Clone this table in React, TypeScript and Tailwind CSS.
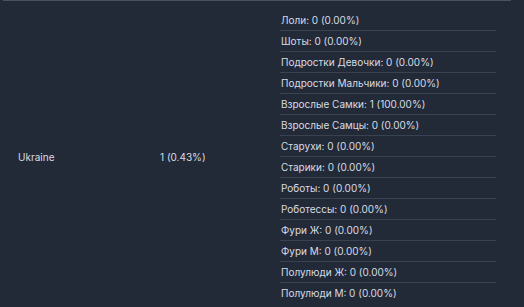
const breakdown = [
  'Лоли: 0 (0.00%)',
  'Шоты: 0 (0.00%)',
  'Подростки Девочки: 0 (0.00%)',
  'Подростки Мальчики: 0 (0.00%)',
  'Взрослые Самки: 1 (100.00%)',
  'Взрослые Самцы: 0 (0.00%)',
  'Старухи: 0 (0.00%)',
  'Старики: 0 (0.00%)',
  'Роботы: 0 (0.00%)',
  'Роботессы: 0 (0.00%)',
  'Фури Ж: 0 (0.00%)',
  'Фури М: 0 (0.00%)',
  'Полулюди Ж: 0 (0.00%)',
  'Полулюди М: 0 (0.00%)',
];

export default function App() {
  return (
    <div className="h-[307px] w-[524px] overflow-hidden bg-[#222a38] font-['Inter',sans-serif] text-[10px] text-[#d8dce3]">
      <div className="ml-[3px] flex w-[508px] border-t border-[#4a5262]">
        <div className="flex w-[142px] items-center pl-[15px]">Ukraine</div>
        <div className="flex w-[120px] items-center pl-[15px]">1 (0.43%)</div>
        <div className="flex-1 px-[15px] py-[9px]">
          <ul>
            {breakdown.map((item, i) => (
              <li
                key={i}
                className={`flex h-[21px] items-center pl-px ${i < breakdown.length - 1 ? 'border-b border-[#3a4252]' : ''}`}
              >
                {item}
              </li>
            ))}
          </ul>
        </div>
      </div>
    </div>
  );
}
